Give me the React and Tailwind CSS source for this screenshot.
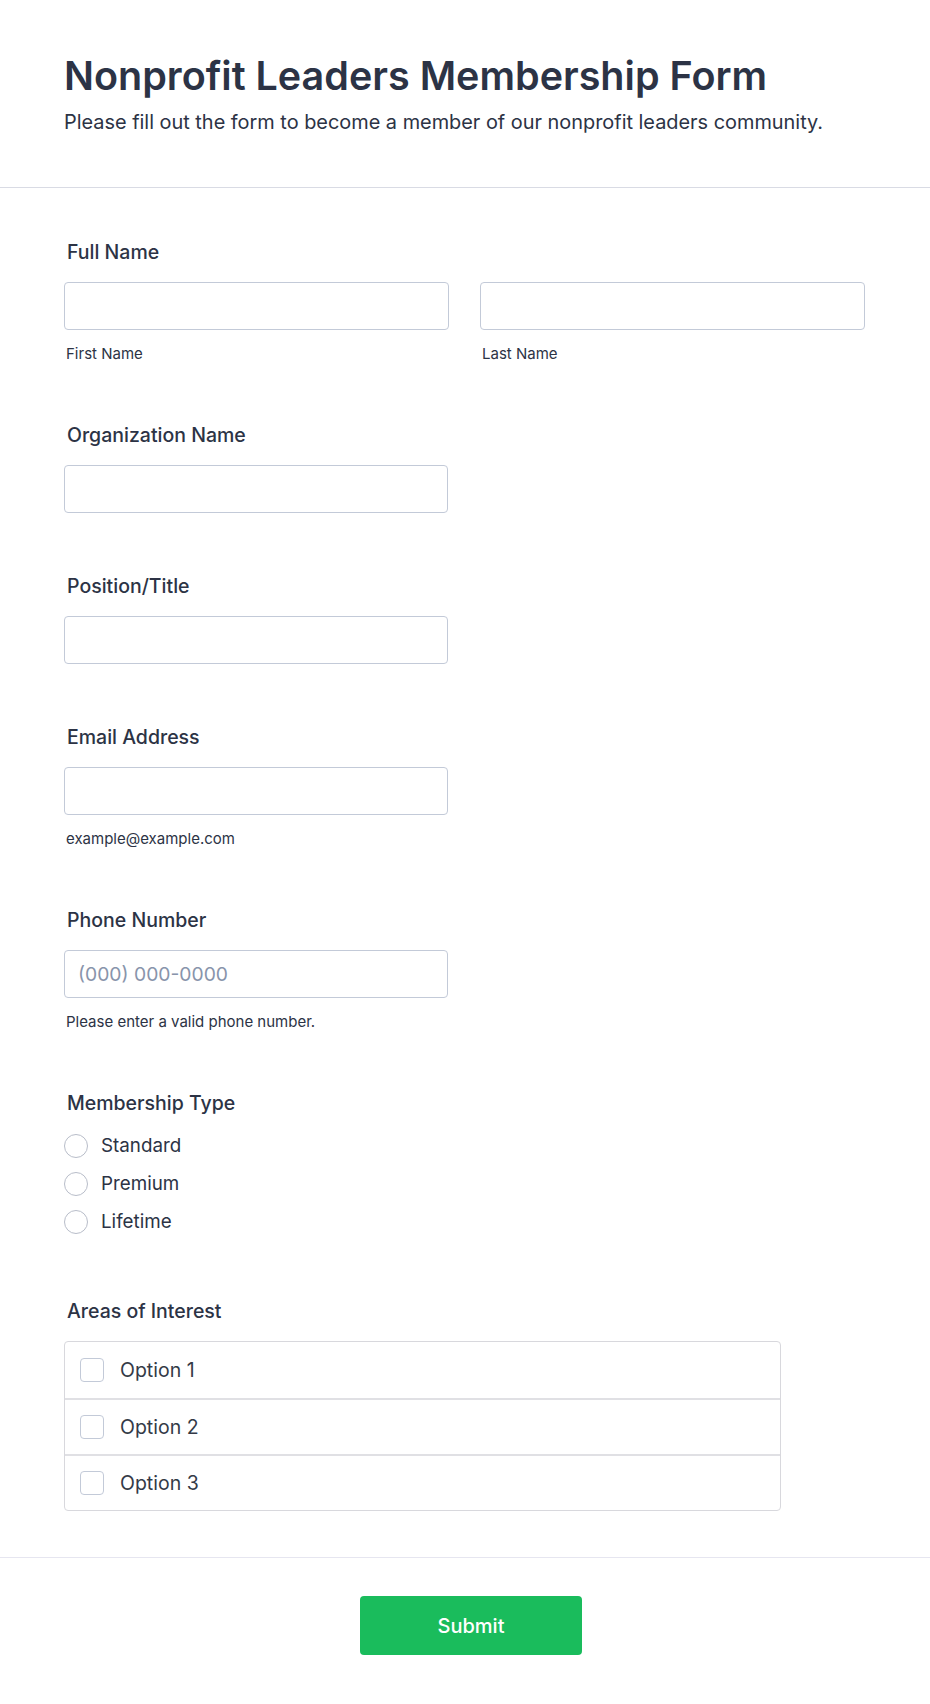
import React from 'react';

const font = { fontFamily: 'Inter, "Noto Sans", sans-serif' };

function Label({ children }) {
    return <div className="pl-[3px] text-[19.5px] leading-[26px] font-medium text-[#2c3345]">{children}</div>;
}

function TextBox({ className = 'w-[384px]', placeholder }) {
    return (
        <input
            type="text"
            placeholder={placeholder}
            className={`${className} h-[48px] rounded-[4px] border border-[#c3cad8] bg-white px-[13px] text-[19.3px] text-[#2c3345] placeholder:text-[#8894ab] outline-none`}
        />
    );
}

function Sublabel({ children }) {
    return <div className="mt-[15px] -mb-px pl-[2px] text-[15px] leading-[18px] text-[#2c3345]">{children}</div>;
}

function Field({ label, children }) {
    return (
        <div className="py-[30px]">
            <Label>{label}</Label>
            <div className="mt-[17px]">{children}</div>
        </div>
    );
}

export default function App() {
    return (
        <div className="min-h-screen bg-white" style={font}>
            <header className="px-[64px] pt-[48px] pb-[51px] border-b border-[#d9dbe4]">
                <h1 className="text-[39.5px] leading-[56px] font-semibold text-[#2c3345]">
                    Nonprofit Leaders Membership Form
                </h1>
                <p className="mt-[4px] text-[19.9px] leading-7 text-[#2c3345]">
                    Please fill out the form to become a member of our nonprofit leaders community.
                </p>
            </header>

            <form className="px-[64px] pt-[21px] pb-[16px] border-b border-[#e6e6f0]">
                <Field label="Full Name">
                    <div className="flex gap-[31px]">
                        <div>
                            <TextBox className="w-[385px]" />
                            <Sublabel>First Name</Sublabel>
                        </div>
                        <div>
                            <TextBox className="w-[385px]" />
                            <Sublabel>Last Name</Sublabel>
                        </div>
                    </div>
                </Field>

                <Field label="Organization Name">
                    <TextBox />
                </Field>

                <Field label="Position/Title">
                    <TextBox />
                </Field>

                <Field label="Email Address">
                    <TextBox />
                    <Sublabel>example@example.com</Sublabel>
                </Field>

                <Field label="Phone Number">
                    <TextBox placeholder="(000) 000-0000" />
                    <Sublabel>Please enter a valid phone number.</Sublabel>
                </Field>

                <div className="pt-[30px] pb-[34px]">
                    <Label>Membership Type</Label>
                    <div className="mt-[18px] flex flex-col gap-[14px]">
                        {['Standard', 'Premium', 'Lifetime'].map((opt) => (
                            <label key={opt} className="flex items-center gap-[13px]">
                                <span className="w-[24px] h-[24px] rounded-full border-[1.5px] border-[#b8bdc9] bg-white" />
                                <span className="text-[18.8px] leading-6 text-[#2c3345]">{opt}</span>
                            </label>
                        ))}
                    </div>
                </div>

                <Field label="Areas of Interest">
                    <div className="w-[717px] rounded-[4px] border border-[#d8d8dd]">
                        {['Option 1', 'Option 2', 'Option 3'].map((opt, i) => (
                            <label
                                key={opt}
                                className={`flex items-center h-[56px] pl-[15px] gap-[16px] ${i > 0 ? 'border-t-2 border-[#e0e0e4]' : ''}`}
                            >
                                <span className="w-[24px] h-[24px] rounded-[4px] border border-[#c3cad8] bg-white" />
                                <span className="text-[19.5px] leading-6 text-[#343a47]">{opt}</span>
                            </label>
                        ))}
                    </div>
                </Field>
            </form>

            <div className="flex justify-center pl-[12px] pt-[38px] pb-[50px]">
                <button
                    type="button"
                    className="w-[222px] h-[59px] rounded-[4px] bg-[#1abc5c] text-white text-[20px] font-medium"
                >
                    Submit
                </button>
            </div>
        </div>
    );
}
